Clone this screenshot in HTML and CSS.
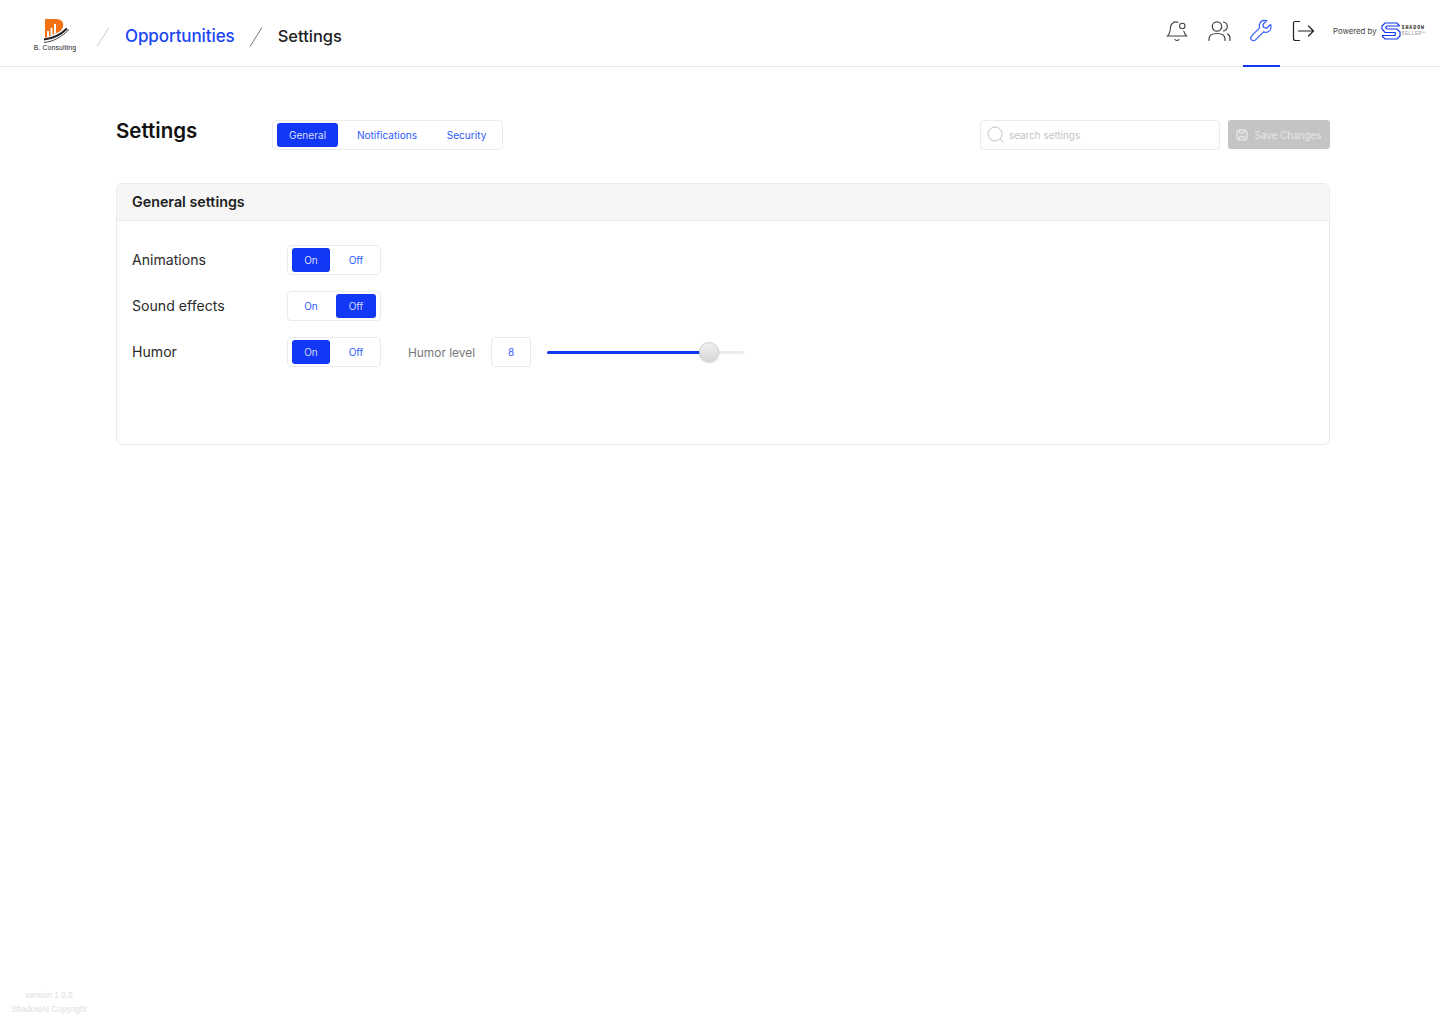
FILE: index.html
```html
<!DOCTYPE html>
<html lang="en">
<head>
<meta charset="utf-8">
<title>Settings</title>
<link rel="stylesheet" href="styles.css">
</head>
<body>
<header class="topbar">
  <div class="brand">
    <svg class="brand-mark" width="36" height="26" viewBox="0 0 36 26">
      <path d="M7 0h11c6 0 8 4 7 8-1 2-2 4-4 5L7 19z" fill="#f47216"/>
      <path d="M9 18v-6h2v5.500zM12.500 16.500V9h2v7zM16 15V5h2v9z" fill="#fff"/>
      <path d="M6 20.500c9-1 17-5 23-11" fill="none" stroke="#222" stroke-width="2"/>
      <path d="M6 23.500c10-1 18-6 25-13" fill="none" stroke="#444" stroke-width="1"/>
    </svg>
    <span class="brand-name">B. Consulting</span>
  </div>
  <svg class="slash slash-first" width="14" height="20" viewBox="0 0 14 20"><path d="M13 .5 1 19.500" stroke="#c8c8c8" fill="none"/></svg>
  <a class="crumb-link">Opportunities</a>
  <svg class="slash slash-second" width="14" height="20" viewBox="0 0 14 20"><path d="M13 .5 1 19.500" stroke="#777" fill="none"/></svg>
  <span class="crumb-current">Settings</span>

  <nav class="top-icons">
    <span class="top-icon">
      <svg width="24" height="24" viewBox="0 0 24 24" fill="none" stroke="#444" stroke-width="1.100" stroke-linecap="round">
        <path d="M13 3.300C9 1.800 5.700 4.800 5.500 8.500c-.2 3.800-.6 6-3 8.500h19c-1.600-1.700-2.300-3-2.700-5"/>
        <circle cx="17.300" cy="7" r="2.700"/>
        <path d="M10 20.500c1 1.300 3 1.300 4 0"/>
      </svg>
    </span>
    <span class="top-icon">
      <svg width="24" height="24" viewBox="0 0 24 24" fill="none" stroke="#444" stroke-width="1.200" stroke-linecap="round">
        <circle cx="10" cy="7.500" r="4.700"/>
        <path d="M2 21.500v-1.500c0-3.500 3-5.500 8-5.500s8 2 8 5.500v1.500"/>
        <path d="M16.500 3c2.600.6 3.800 2.500 3.800 4.500s-1.200 3.900-3.800 4.500"/>
        <path d="M20.500 15c1.600.8 2.500 2.500 2.500 4.500v2"/>
      </svg>
    </span>
    <span class="top-icon is-active">
      <svg width="24" height="24" viewBox="0 0 24 24" fill="none" stroke="#2e5bff" stroke-width="1.200" stroke-linejoin="round">
        <path d="M21.600 5.500l-3.900 3.700-3-.7-.8-3 3.800-3.800c-2.700-.8-5.700.2-6.900 2.700-.7 1.500-.7 3-.2 4.400L2.600 16.900c-1.200 1.100-1.200 2.900-.1 4 1.100 1.100 2.900 1.100 4 0l8.100-8c1.500.6 3.100.5 4.500-.2 2.600-1.300 3.500-4.500 2.500-7.200z"/>
      </svg>
    </span>
    <span class="top-icon">
      <svg width="24" height="24" viewBox="0 0 24 24" fill="none" stroke="#222" stroke-width="1.200" stroke-linecap="round" stroke-linejoin="round">
        <path d="M8.500 2.500H4.500c-1.200 0-2 .8-2 2v15c0 1.200.8 2 2 2h4"/>
        <path d="M7.500 12h15M17.500 7l5 5-5 5"/>
      </svg>
    </span>
  </nav>
  <div class="powered">
    <span class="powered-label">Powered by</span>
    <svg width="20" height="18" viewBox="0 0 20 18" fill="none" stroke="#1237f5" stroke-width="1.200">
      <path d="M18.500 4 16 1H4L1 4v3l3 3.500h10l.5.5-.5 2.500H1"/>
      <path d="M18.500 4H6L4.500 5.500 6 7h10l3 3v4l-3 3H4l-3-3"/>
    </svg>
    <span class="powered-logo-text"><b>SHADOW</b><i>SELLER™</i></span>
  </div>
</header>

<main class="content">
  <div class="title-row">
    <h1 class="page-title">Settings</h1>
    <div class="segmented tabs">
      <button class="seg tab is-on">General</button>
      <button class="seg tab tab-wide">Notifications</button>
      <button class="seg tab">Security</button>
    </div>
    <label class="search">
      <svg width="18" height="18" viewBox="0 0 18 18" fill="none" stroke="#c4c4c4" stroke-width="1">
        <circle cx="8" cy="8" r="7"/><path d="M13 13l4 4"/>
      </svg>
      <span class="search-text">search settings</span>
    </label>
    <button class="save">
      <svg width="12" height="12" viewBox="0 0 12 12" fill="none" stroke="#e6e6e6" stroke-width="1.300">
        <path d="M1 2.500 2.500 1h6.500L11 3v6.500L9.500 11h-7L1 9.500z"/>
        <path d="M3.500 1.500v2.500h4.500V1.500M3.500 10.500V7.500h5v3"/>
      </svg>
      Save Changes
    </button>
  </div>

  <section class="card">
    <h2 class="card-head">General settings</h2>
    <div class="card-body">
      <div class="row">
        <span class="row-label">Animations</span>
        <div class="segmented toggle">
          <button class="seg opt-on is-on">On</button>
          <button class="seg opt-off">Off</button>
        </div>
      </div>
      <div class="row">
        <span class="row-label">Sound effects</span>
        <div class="segmented toggle">
          <button class="seg opt-on">On</button>
          <button class="seg opt-off is-on">Off</button>
        </div>
      </div>
      <div class="row">
        <span class="row-label">Humor</span>
        <div class="segmented toggle">
          <button class="seg opt-on is-on">On</button>
          <button class="seg opt-off">Off</button>
        </div>
        <span class="level-label">Humor level</span>
        <span class="level-value">8</span>
        <div class="slider">
          <span class="slider-fill"></span>
          <span class="slider-thumb"></span>
        </div>
      </div>
    </div>
  </section>
</main>

<footer class="foot">
  <span>version 1.0.0</span>
  <span>ShadowAI Copyright</span>
</footer>
</body>
</html>
```
FILE: styles.css
```css
* { box-sizing: border-box; }
html, body { height: 100%; }
body {
  margin: 0;
  min-height: 1024px;
  display: flex;
  flex-direction: column;
  background: #fff;
  color: #1c1c1c;
  font-family: Inter, "Noto Sans", sans-serif;
}
button { font-family: inherit; border: 0; background: none; padding: 0; }

.topbar {
  height: 67px;
  flex: none;
  display: flex;
  align-items: center;
  border-bottom: 1px solid #e8e8e8;
  padding: 0 15px 0 34px;
}
.brand {
  width: 42px;
  display: flex;
  flex-direction: column;
  align-items: center;
  margin-top: 3px;
}
.brand-mark { display: block; margin-left: 2px; }
.brand-name {
  font: 6.900px/7px "Liberation Sans", Arial, sans-serif;
  letter-spacing: .1px;
  color: #222;
  white-space: nowrap;
  margin-top: -1px;
}
.slash { flex: none; margin-top: 8px; }
.slash-first { margin-left: 20px; }
.slash-second { margin-left: 14px; }
.crumb-link {
  margin-left: 15px;
  font-size: 17px;
  font-weight: 500;
  color: #1a46f5;
  letter-spacing: -.1px;
  white-space: nowrap;
  padding-top: 5px;
}
.crumb-current {
  margin-left: 15px;
  font-size: 16.500px;
  font-weight: 500;
  color: #222;
  padding-top: 5px;
}
.top-icons {
  margin-left: auto;
  display: flex;
  height: 66px;
}
.top-icon {
  width: 37px;
  margin-left: 5px;
  height: 67px;
  display: flex;
  align-items: center;
  justify-content: center;
  padding-bottom: 4px;
  border-bottom: 2px solid transparent;
}
.top-icon.is-active { border-bottom-color: #1237f5; }
.powered {
  display: flex;
  align-items: center;
  margin: 0 0 4px 11px;
}
.powered-label { font-size: 7.800px; color: #444; white-space: nowrap; margin-right: 4px; }
.powered-logo-text { display: flex; flex-direction: column; margin-left: 1px; }
.powered-logo-text b, .powered-logo-text i {
  font: 5px/6px "Liberation Mono", monospace;
  white-space: nowrap;
}
.powered-logo-text b { font-weight: 700; color: #222; letter-spacing: .9px; }
.powered-logo-text i { font-style: normal; color: #999; letter-spacing: .35px; }

.content { padding: 53px 110px 0 116px; }
.title-row {
  display: flex;
  align-items: flex-start;
  height: 30px;
}
.page-title {
  margin: -2px 0 0;
  width: 156px;
  font-size: 20.500px;
  font-weight: 600;
  color: #111;
}
.segmented {
  display: flex;
  align-items: stretch;
  height: 30px;
  padding: 2px 4px;
  border: 1px solid #ebebeb;
  border-radius: 4px;
  background: #fff;
}
.seg {
  font-size: 10px;
  color: #2e5bff;
  border-radius: 3px;
}
.seg.is-on { background: #1237f5; color: #d5dcff; }
.tab { width: 61px; font-size: 10.100px; }
.tab-wide { width: 98px; }
.tabs { width: 231px; }
.search {
  margin-left: auto;
  width: 240px;
  height: 30px;
  display: flex;
  align-items: center;
  gap: 4px;
  padding-left: 6px;
  border: 1px solid #ebebeb;
  border-radius: 4px;
}
.search-text { font-size: 9.900px; color: #c4c4c4; }
.save {
  margin-left: 8px;
  width: 102px;
  height: 29px;
  display: flex;
  align-items: center;
  justify-content: center;
  gap: 6px;
  background: #c4c4c4;
  border-radius: 3px;
  color: #e6e6e6;
  font-size: 9.900px;
  white-space: nowrap;
}

.card {
  margin-top: 33px;
  height: 262px;
  border: 1px solid #ebebeb;
  border-radius: 6px;
  overflow: hidden;
}
.card-head {
  margin: 0;
  height: 37px;
  padding: 0 15px 2px;
  display: flex;
  align-items: center;
  background: #f6f6f6;
  border-bottom: 1px solid #ebebeb;
  font-size: 14.300px;
  font-weight: 600;
  color: #1c1c1c;
}
.card-body {
  padding: 24px 15px 0;
  display: flex;
  flex-direction: column;
  gap: 16px;
}
.row {
  display: flex;
  align-items: center;
  height: 30px;
}
.row-label { width: 155px; font-size: 14.100px; color: #2b2b2b; padding-bottom: 2px; }
.toggle { width: 94px; }
.opt-on { width: 38px; }
.opt-off { width: 40px; margin-left: 6px; }
.level-label { margin-left: 27px; width: 83px; font-size: 11.900px; color: #777; white-space: nowrap; }
.level-value {
  width: 40px;
  height: 30px;
  display: flex;
  align-items: center;
  justify-content: center;
  border: 1px solid #ebebeb;
  border-radius: 4px;
  font-size: 10px;
  color: #2e5bff;
}
.slider {
  position: relative;
  margin-left: 16px;
  width: 197px;
  height: 3px;
  border-radius: 2px;
  background: #ececec;
}
.slider-fill {
  display: block;
  width: 162px;
  height: 3px;
  border-radius: 2px;
  background: #1237f5;
}
.slider-thumb {
  position: absolute;
  left: 152px;
  top: -8.500px;
  width: 20px;
  height: 20px;
  border-radius: 50%;
  border: 1px solid #d0d0d0;
  background: linear-gradient(#f0f0f0, #d8d8d8);
  box-shadow: 0 1px 2px rgba(0,0,0,.2);
}

.foot {
  margin-top: auto;
  width: 98px;
  padding-bottom: 10px;
  display: flex;
  flex-direction: column;
  align-items: center;
  gap: 4px;
  font-family: "Liberation Sans", Arial, sans-serif;
  font-size: 8.300px;
  line-height: 10px;
  color: #dedede;
}
```
